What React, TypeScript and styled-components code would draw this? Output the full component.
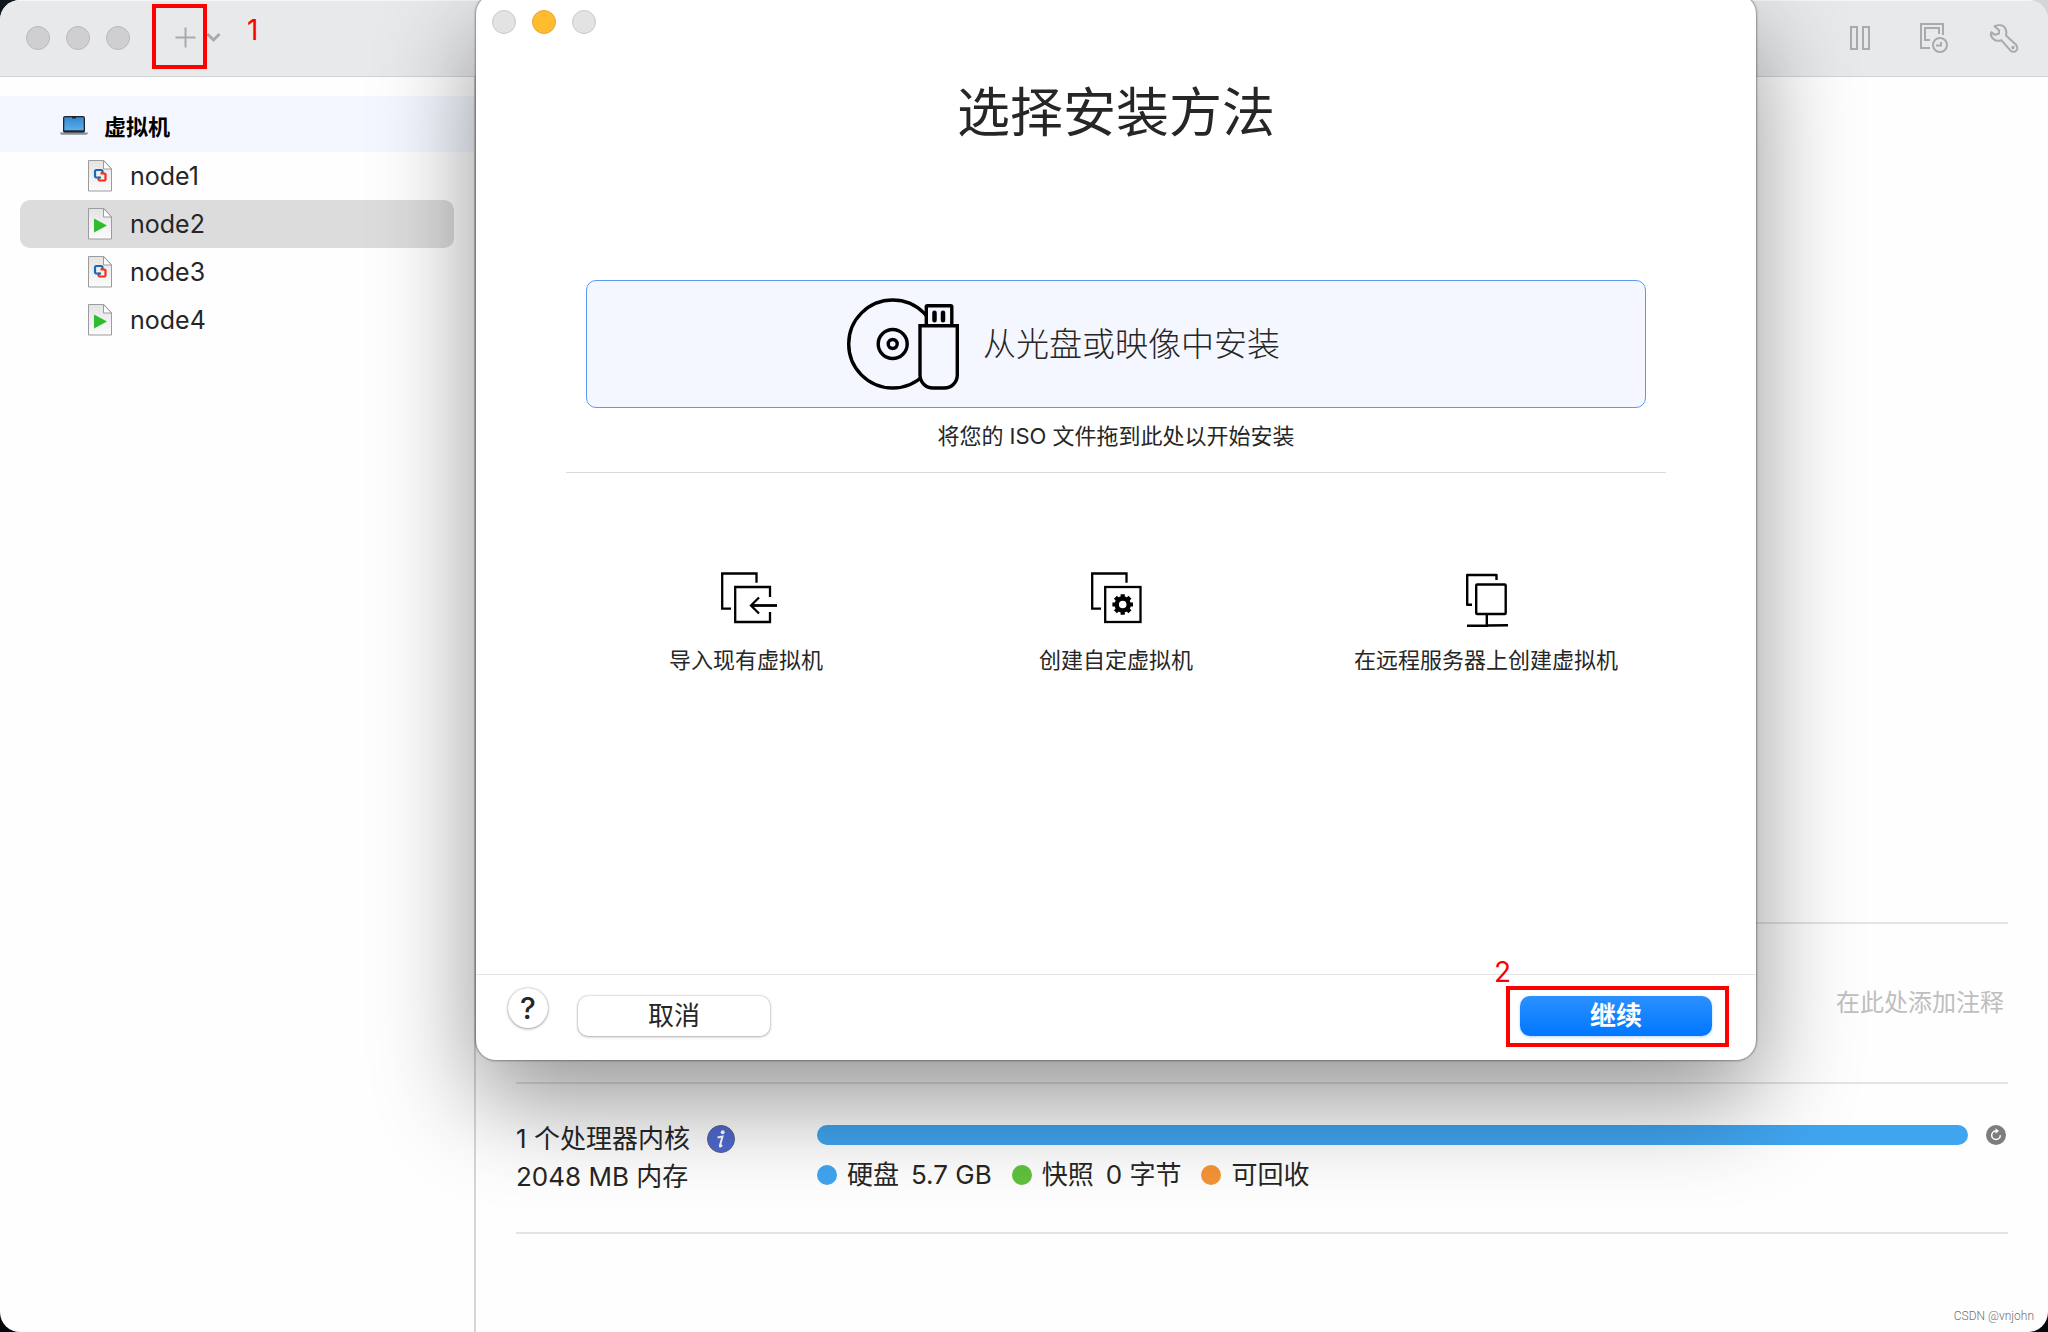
import React from 'react';
import styled, { createGlobalStyle } from 'styled-components';

const Global = createGlobalStyle`
  * { box-sizing: border-box; }
  body {
    margin: 0;
    background:
      linear-gradient(to right, #0f1820 50%, #d5d6d8 50%) top / 100% 50% no-repeat,
      #05080b;
    font-family: Inter, 'Noto Sans CJK SC', sans-serif;
    color: #262626;
  }
  button, input { font-family: inherit; color: inherit; }
  button { border: 0; padding: 0; background: none; cursor: pointer; }
  ul { list-style: none; margin: 0; padding: 0; }
  svg { display: block; flex: none; overflow: visible; }
`;

const Window = styled.div`
  position: relative;
  display: flex;
  flex-direction: column;
  min-height: 100vh;
  overflow: hidden;
  border-radius: 20px;
  background: #fefefe;
`;

const Toolbar = styled.header`
  display: flex;
  align-items: center;
  height: 77px;
  padding: 0 30px 0 26px;
  background: #e8e9eb;
  border-bottom: 1px solid #d2d3d5;
  box-shadow: inset 0 1px #f6f6f7;
`;

const Lights = styled.div`
  display: flex;
  gap: 16px;
`;

const Light = styled.button<{ $fill: string; $edge: string }>`
  width: 24px;
  height: 24px;
  border-radius: 50%;
  background: ${(p) => p.$fill};
  border: 1px solid ${(p) => p.$edge};
`;

const AddTool = styled.div`
  position: relative;
  display: flex;
  align-items: center;
  gap: 11px;
  margin-left: 45px;
  padding-bottom: 2px;
  color: #a9aaac;
`;

const ToolGroup = styled.div`
  display: flex;
  align-items: center;
  gap: 42px;
  margin-left: auto;
  color: #a9aaac;
`;

const ToolButton = styled.button`
  display: flex;
`;

const Marker = styled.span`
  position: absolute;
  border: 4px solid #ff0000;
  pointer-events: none;
`;

const AddMarker = styled(Marker)`
  left: -23px;
  top: -23px;
  width: 55px;
  height: 65px;
`;

const ContinueMarker = styled(Marker)`
  inset: -10px -17px -11px -14px;
`;

const MarkerNumber = styled.span<{ $left: number; $top: number }>`
  position: absolute;
  left: ${(p) => p.$left}px;
  top: ${(p) => p.$top}px;
  font-size: 28px;
  line-height: 32px;
  color: #ff0000;
  pointer-events: none;
`;

const Body = styled.div`
  display: flex;
  flex: 1;
`;

const Sidebar = styled.nav`
  flex: none;
  width: 476px;
  padding-top: 19px;
  border-right: 2px solid #d6d6d6;
`;

const GroupHeader = styled.h2`
  display: flex;
  align-items: center;
  gap: 16px;
  height: 56px;
  margin: 0;
  padding: 6px 0 0 60px;
  background: #f4f7ff;
  color: #000;
  font-size: 22px;
  line-height: 32px;
  font-weight: 700;
`;

const MachineButton = styled.button<{ $selected: boolean }>`
  display: flex;
  align-items: center;
  gap: 18px;
  width: calc(100% - 40px);
  height: 48px;
  margin: 0 20px;
  padding-left: 68px;
  border-radius: 10px;
  background: ${(p) => (p.$selected ? '#dcdcdc' : 'transparent')};
  font-size: 25px;
  line-height: 32px;
`;

const Details = styled.main`
  display: flex;
  flex-direction: column;
  flex: 1;
  min-width: 0;
  padding: 0 40px 98px;
`;

const Preview = styled.div`
  flex: 1;
`;

const Notes = styled.section`
  display: flex;
  align-items: center;
  height: 160px;
  border-top: 2px solid #e3e3e3;
`;

const NoteInput = styled.input`
  width: 100%;
  border: 0;
  padding: 0 4px;
  outline: 0;
  background: none;
  font-size: 24px;
  line-height: 32px;
  text-align: right;
  &::placeholder { color: #bfbfbf; opacity: 1; }
`;

const Stats = styled.section`
  display: flex;
  padding: 36px 0 32px;
  border-top: 2px solid #e3e3e3;
  border-bottom: 2px solid #e3e3e3;
  font-size: 26px;
`;

const Hardware = styled.div`
  flex: none;
  width: 301px;
`;

const HardwareLine = styled.div`
  display: flex;
  align-items: center;
  gap: 17px;
  line-height: 38px;
`;

const Storage = styled.div`
  flex: 1;
  min-width: 0;
`;

const BarRow = styled.div`
  display: flex;
  align-items: center;
  gap: 18px;
  height: 30px;
  padding-right: 2px;
`;

const Bar = styled.div`
  flex: 1;
  height: 20px;
  border-radius: 10px;
  background: #40a5ef;
`;

const Legend = styled.ul`
  display: flex;
  gap: 20px;
  height: 50px;
  align-items: center;
`;

const LegendItem = styled.li`
  display: flex;
  align-items: center;
  gap: 12px;
  line-height: 32px;
`;

const Dot = styled.span<{ $color: string }>`
  width: 20px;
  height: 20px;
  margin-right: -2px;
  border-radius: 50%;
  background: ${(p) => p.$color};
`;

const Watermark = styled.div`
  position: absolute;
  right: 14px;
  bottom: 8px;
  font-family: Roboto, sans-serif;
  font-size: 12px;
  line-height: 16px;
  font-weight: 300;
  color: #707070;
`;

const Sheet = styled.div`
  position: absolute;
  left: 476px;
  top: -6px;
  width: 1280px;
  display: flex;
  flex-direction: column;
  border-radius: 20px;
  background: #fff;
  box-shadow: 0 0 2px 1px rgba(0, 0, 0, 0.35), 0 40px 100px rgba(0, 0, 0, 0.42);
`;

const SheetLights = styled(Lights)`
  padding: 16px 16px 0;
`;

const Title = styled.h1`
  margin: 39px 0 126px;
  text-align: center;
  font-size: 53px;
  line-height: 80px;
  font-weight: 400;
`;

const DropZone = styled.button`
  display: flex;
  align-items: center;
  gap: 24px;
  height: 128px;
  margin: 1px 110px 0;
  padding-left: 260px;
  border: 1px solid #5b98f2;
  border-radius: 10px;
  background: #f4f7ff;
  font-size: 33px;
  line-height: 48px;
  font-weight: 300;
`;

const Hint = styled.p`
  margin: 11px 90px 0;
  padding-bottom: 19px;
  border-bottom: 1px solid #d9d9d9;
  text-align: center;
  font-size: 22px;
  line-height: 34px;
`;

const Options = styled.div`
  display: grid;
  grid-template-columns: repeat(3, 1fr);
  padding: 99px 85px 298px;
`;

const Option = styled.button`
  display: flex;
  flex-direction: column;
  align-items: center;
  gap: 20px;
  font-size: 22px;
  line-height: 32px;
`;

const SheetFooter = styled.footer`
  display: flex;
  height: 86px;
  padding: 13px 44px 0 32px;
  border-top: 1px solid #e3e3e3;
`;

const HelpButton = styled.button`
  width: 40px;
  height: 40px;
  border-radius: 50%;
  background: #fff;
  box-shadow: 0 0 2px rgba(0, 0, 0, 0.3), 0 1px 3px rgba(0, 0, 0, 0.3);
  font-size: 30px;
  line-height: 38px;
  font-weight: 500;
`;

const PushButton = styled.button<{ $primary?: boolean }>`
  width: 192px;
  height: 40px;
  border-radius: 10px;
  background: ${(p) => (p.$primary ? 'linear-gradient(#2b90ff, #0077ff)' : '#fff')};
  box-shadow: ${(p) =>
    p.$primary ? '0 1px 3px rgba(0, 100, 255, 0.3)' : '0 0 2px rgba(0, 0, 0, 0.3), 0 1px 3px rgba(0, 0, 0, 0.25)'};
  color: ${(p) => (p.$primary ? '#fff' : '#262626')};
  font-size: 26px;
  line-height: 38px;
  font-weight: ${(p) => (p.$primary ? 600 : 400)};
`;

const ButtonSlot = styled.div<{ $end?: boolean }>`
  position: relative;
  height: 40px;
  margin-top: 8px;
  margin-left: ${(p) => (p.$end ? 'auto' : '30px')};
`;

const PlusIcon = () => (
  <svg width="21" height="21" viewBox="0 0 21 21" stroke="currentColor" strokeWidth="2">
    <path d="M10.5 0.5v20M0.5 10.5h20" />
  </svg>
);

const ChevronIcon = () => (
  <svg width="13" height="9" viewBox="0 0 13 9" fill="none" stroke="currentColor" strokeWidth="3">
    <path d="M0.500 1l6 6 6-6" />
  </svg>
);

const PauseIcon = () => (
  <svg width="28" height="24" viewBox="0 0 28 24" fill="none" stroke="currentColor" strokeWidth="2">
    <rect x="1" y="1" width="6" height="22" />
    <rect x="13" y="1" width="6" height="22" />
  </svg>
);

const SnapshotIcon = () => (
  <svg width="28" height="30" viewBox="0 0 28 30" fill="none" stroke="currentColor" strokeWidth="2">
    <path d="M23 12V1H1v24h9" />
    <path d="M19 11V5H5v12h5" />
    <circle cx="20" cy="22" r="7" />
    <path d="M16 22.5h5V19" />
  </svg>
);

const WrenchIcon = () => (
  <svg width="28" height="29" viewBox="0 0 28 29" fill="none" stroke="currentColor" strokeWidth="2" strokeLinejoin="round">
    <path d="M4.5 2.5C9 .2 13.500 1 15.500 4.500C16.700 7 16.600 9 16 11.500L25.800 20.500C28.500 23.300 27.500 26.500 25 27.500C23 28.200 21.500 27.700 20.300 26.300L11.300 16.200C8 17.200 5 17 2.800 14.500C1 12.500.6 10 1.200 8.200L5 10.800L8.800 9.800L9.200 6.200Z" />
    <circle cx="23" cy="23.500" r="0.800" />
  </svg>
);

const LaptopIcon = () => (
  <svg width="28" height="19" viewBox="0 0 28 19">
    <defs>
      <linearGradient id="screen" x1="0" y1="0" x2="0" y2="1">
        <stop offset="0" stopColor="#3789cf" />
        <stop offset="1" stopColor="#5aaeea" />
      </linearGradient>
    </defs>
    <g transform="translate(0 -2)">
      <rect x="3" y="0" width="22" height="17" rx="2" fill="#20242a" />
      <rect x="4.300" y="1.300" width="19.400" height="13" fill="url(#screen)" />
      <rect x="12" y="1" width="4" height="1.500" fill="#20242a" />
      <path d="M0 16.500h28c0 1.500-1.200 2.300-3 2.300H3C1.200 18.800 0 18 0 16.500z" fill="#8b8e93" />
    </g>
  </svg>
);

const MachineIcon = ({ running }: { running: boolean }) => (
  <svg width="24" height="32" viewBox="0 0 24 32">
    <defs>
      <linearGradient id="page" x1="0" y1="0" x2="0" y2="1">
        <stop offset="0" stopColor="#e4e4e4" />
        <stop offset="1" stopColor="#fbfbfb" />
      </linearGradient>
    </defs>
    <path d="M.5.500H16L23.500 9v22H.5z" fill="url(#page)" stroke="#9b9b9b" />
    <path d="M15.500 .5L23.500 9H15.500z" fill="#fff" stroke="#9b9b9b" strokeLinejoin="round" />
    {running ? (
      <path d="M6 10.500v14l13-7z" fill="#2fbd2f" />
    ) : (
      <g fill="none" strokeWidth="2.200" strokeLinejoin="round">
        <path d="M10.500 17.500H8L7 16.500V11L8 10H13.500L14.500 11V13" stroke="#1f68ad" />
        <path d="M12.500 13.500H16.500L17.500 14.500V19.500L16.500 20.500H11.500L10.500 19.500V17" stroke="#fb2b10" />
        <path d="M10 17.500h3" stroke="#1f68ad" />
      </g>
    )}
  </svg>
);

const InfoIcon = () => (
  <svg width="28" height="28" viewBox="0 0 28 28">
    <circle cx="14" cy="14" r="13.500" fill="#4f69cf" stroke="#5b6183" />
    <circle cx="15.700" cy="7.300" r="2" fill="#fff" />
    <path d="M10.500 12.500l5-1-2.600 9.200c-.3 1.200.6 1 2.200-.7" fill="none" stroke="#fff" strokeWidth="2" />
  </svg>
);

const ReloadIcon = () => (
  <svg width="20" height="20" viewBox="0 0 20 20">
    <circle cx="10" cy="10" r="10" fill="#7d7d7d" />
    <path d="M10 6A4.300 4.300 0 1 0 14.300 10.300" fill="none" stroke="#fff" strokeWidth="1.500" />
    <path d="M9.500 3.200L13 6 9.500 8.800z" fill="#fff" />
  </svg>
);

const DiscIcon = () => (
  <svg width="112" height="92" viewBox="0 0 112 92" fill="none" stroke="#000" strokeWidth="3.400">
    <circle cx="45.700" cy="46" r="44" />
    <circle cx="45.700" cy="46" r="14.500" />
    <circle cx="45.700" cy="46" r="4.500" />
    <rect x="79.300" y="7.700" width="25.500" height="22" rx="1" fill="#f4f7ff" stroke="#000" />
    <path d="M73 27.700H110.300V77a13 13 0 0 1-13 13H86a13 13 0 0 1-13-13z" fill="#f4f7ff" />
    <path d="M87.500 14.800v7.400M96 14.800v7.400" strokeWidth="4.500" strokeLinecap="round" />
  </svg>
);

const ImportIcon = () => (
  <svg width="50" height="52" viewBox="0 0 50 52" fill="none" stroke="#000" strokeWidth="2.300">
    <path d="M35.500 10.700V1.500H1.200V36.700H10" />
    <path d="M49 25V15H14.200V50H49V40" />
    <path d="M56 33.500H30" strokeWidth="2.800" />
    <path d="M38 25.500L30 33.500L38 41.500" />
  </svg>
);

const CustomIcon = () => (
  <svg width="50" height="52" viewBox="0 0 50 52" fill="none" stroke="#000" strokeWidth="2.300">
    <path d="M35.500 10.700V1.500H1.200V36.700H10" />
    <rect x="14.200" y="15" width="35.300" height="35" />
    <circle cx="31.700" cy="32.500" r="6" strokeWidth="4.400" />
    {[0, 45, 90, 135].map((a) => (
      <path
        key={a}
        d="M31.700 22.200v4M31.700 38.800v4"
        strokeWidth="4.200"
        transform={`rotate(${a} 31.700 32.500)`}
      />
    ))}
  </svg>
);

const RemoteIcon = () => (
  <svg width="50" height="52" viewBox="0 0 50 52" fill="none" stroke="#000" strokeWidth="2.400" strokeLinejoin="round">
    <path d="M35.500 8V3H6.200V32.700H11" />
    <rect x="15.200" y="12.500" width="29.500" height="29.500" rx="1" />
    <path d="M25.800 42v13M6 53.700L47 53.300" />
  </svg>
);

const machines = [
  { name: 'node1', running: false },
  { name: 'node2', running: true },
  { name: 'node3', running: false },
  { name: 'node4', running: true },
];

const legend = [
  { label: '硬盘', value: '5.7 GB', color: '#40a5ef' },
  { label: '快照', value: '0 字节', color: '#5ec23d' },
  { label: '可回收', value: '', color: '#f49436' },
];

const options = [
  { label: '导入现有虚拟机', Icon: ImportIcon },
  { label: '创建自定虚拟机', Icon: CustomIcon },
  { label: '在远程服务器上创建虚拟机', Icon: RemoteIcon },
];

export default function App() {
  return (
    <>
      <Global />
      <Window>
        <Toolbar>
          <Lights>
            {['关闭', '最小化', '缩放'].map((name) => (
              <Light key={name} aria-label={name} $fill="#cfcfd1" $edge="#b9babc" />
            ))}
          </Lights>
          <AddTool>
            <ToolButton aria-label="添加">
              <PlusIcon />
            </ToolButton>
            <ToolButton aria-label="添加选项">
              <ChevronIcon />
            </ToolButton>
            <AddMarker />
            <MarkerNumber $left={72} $top={-13}>1</MarkerNumber>
          </AddTool>
          <ToolGroup>
            <ToolButton aria-label="暂停"><PauseIcon /></ToolButton>
            <ToolButton aria-label="快照"><SnapshotIcon /></ToolButton>
            <ToolButton aria-label="设置"><WrenchIcon /></ToolButton>
          </ToolGroup>
        </Toolbar>
        <Body>
          <Sidebar>
            <GroupHeader>
              <LaptopIcon />
              虚拟机
            </GroupHeader>
            <ul>
              {machines.map((m) => (
                <li key={m.name}>
                  <MachineButton $selected={m.name === 'node2'}>
                    <MachineIcon running={m.running} />
                    {m.name}
                  </MachineButton>
                </li>
              ))}
            </ul>
          </Sidebar>
          <Details>
            <Preview />
            <Notes>
              <NoteInput aria-label="注释" placeholder="在此处添加注释" />
            </Notes>
            <Stats>
              <Hardware>
                <HardwareLine>
                  1 个处理器内核
                  <InfoIcon />
                </HardwareLine>
                <HardwareLine>2048 MB 内存</HardwareLine>
              </Hardware>
              <Storage>
                <BarRow>
                  <Bar />
                  <ToolButton aria-label="刷新"><ReloadIcon /></ToolButton>
                </BarRow>
                <Legend>
                  {legend.map((l) => (
                    <LegendItem key={l.label}>
                      <Dot $color={l.color} />
                      <span>{l.label}</span>
                      {l.value && <span>{l.value}</span>}
                    </LegendItem>
                  ))}
                </Legend>
              </Storage>
            </Stats>
          </Details>
        </Body>
        <Sheet role="dialog" aria-labelledby="sheet-title">
          <SheetLights>
            <Light aria-label="关闭" $fill="#e3e3e3" $edge="#c9c9c9" />
            <Light aria-label="最小化" $fill="#febc2e" $edge="#e2a63a" />
            <Light aria-label="缩放" $fill="#e3e3e3" $edge="#c9c9c9" />
          </SheetLights>
          <Title id="sheet-title">选择安装方法</Title>
          <DropZone>
            <DiscIcon />
            从光盘或映像中安装
          </DropZone>
          <Hint>将您的 ISO 文件拖到此处以开始安装</Hint>
          <Options>
            {options.map(({ label, Icon }) => (
              <Option key={label}>
                <Icon />
                {label}
              </Option>
            ))}
          </Options>
          <SheetFooter>
            <HelpButton aria-label="帮助">?</HelpButton>
            <ButtonSlot>
              <PushButton>取消</PushButton>
            </ButtonSlot>
            <ButtonSlot $end>
              <PushButton $primary>继续</PushButton>
              <ContinueMarker />
              <MarkerNumber $left={-26} $top={-40}>2</MarkerNumber>
            </ButtonSlot>
          </SheetFooter>
        </Sheet>
        <Watermark>CSDN @vnjohn</Watermark>
      </Window>
    </>
  );
}
